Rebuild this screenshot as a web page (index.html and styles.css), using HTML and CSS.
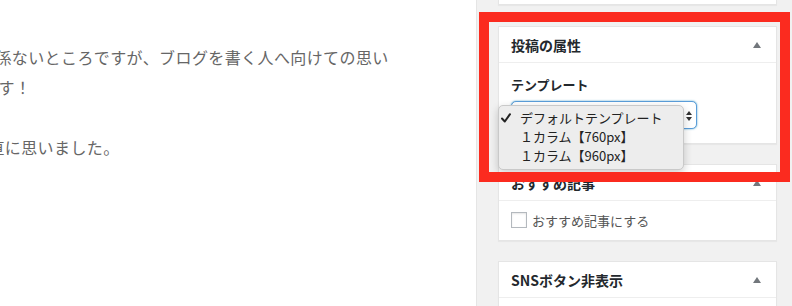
FILE: index.html
```html
<!DOCTYPE html>
<html>
<head>
    <meta charset="utf-8" />
    <title>投稿の編集</title>
    <link rel="stylesheet" href="styles.css">
</head>
<body>
    <div class="content">
        <div class="line l1">関係ないところですが、ブログを書く人へ向けての思い</div>
        <div class="line l2">です！</div>
        <div class="line">&nbsp;</div>
        <div class="line l3">素直に思いました。</div>
    </div>

    <div class="sidebar">
        <div class="postbox cut"></div>

        <div class="postbox">
            <div class="postbox-header">
                <h2>投稿の属性</h2>
                <span class="toggle"></span>
            </div>
            <div class="inside">
                <p class="label">テンプレート</p>
                <div class="select">
                    <span class="arrows">
                        <span class="up"></span>
                        <span class="down"></span>
                    </span>
                    <ul class="dropdown">
                        <li class="checked">
                            <svg class="check" width="10" height="10" viewBox="0 0 10 10">
                                <path d="M1 5.5 L3.8 8.5 L9 1.2" fill="none" stroke="#222" stroke-width="2" stroke-linecap="round" stroke-linejoin="round"/>
                            </svg>デフォルトテンプレート
                        </li>
                        <li>１カラム【760px】</li>
                        <li>１カラム【960px】</li>
                    </ul>
                </div>
            </div>
        </div>

        <div class="postbox">
            <div class="postbox-header">
                <h2>おすすめ記事</h2>
                <span class="toggle"></span>
            </div>
            <div class="inside check-row">
                <span class="checkbox"></span>
                <span>おすすめ記事にする</span>
            </div>
        </div>

        <div class="postbox">
            <div class="postbox-header">
                <h2>SNSボタン非表示</h2>
                <span class="toggle"></span>
            </div>
            <div class="inside"></div>
        </div>
    </div>

    <div class="highlight"></div>
</body>
</html>
```

FILE: styles.css
```css
html {
    overflow: hidden;
}

body {
    margin: 0;
    padding: 0;
    display: flex;
    height: 306px;
    overflow: hidden;
    position: relative;
    font-family: "Noto Sans CJK JP", "Noto Sans", sans-serif;
    background-color: #f1f1f1;
}

.content {
    width: 476px;
    background-color: white;
    border-right: 1px solid #e5e5e5;
    padding-top: 42px;
    overflow: hidden;
    flex-shrink: 0;
}

.line {
    font-size: 16px;
    line-height: 30px;
    letter-spacing: 0.4px;
    color: #666;
    white-space: nowrap;
}

.l1 {
    margin-left: -21px;
}

.l2 {
    margin-left: -18px;
}

.l3 {
    margin-left: -28px;
}

.sidebar {
    flex: 1;
    padding: 0 15px 0 21px;
    overflow: hidden;
}

.postbox {
    background-color: white;
    border: 1px solid #e5e5e5;
    box-shadow: 0 1px 1px rgba(0, 0, 0, 0.04);
    margin-bottom: 20px;
}

.postbox.cut {
    border-top: none;
    height: 4px;
    margin-bottom: 21px;
}

.postbox-header {
    height: 35px;
    border-bottom: 1px solid #eee;
    display: flex;
    align-items: center;
    justify-content: space-between;
    padding: 0 15px 0 12px;
}

.postbox-header h2 {
    margin: 0;
    font-size: 14px;
    font-weight: bold;
    color: #23282d;
}

.toggle {
    width: 0;
    height: 0;
    border-left: 4px solid transparent;
    border-right: 4px solid transparent;
    border-bottom: 6px solid #72777c;
}

.inside {
    padding: 12px 12px 14px;
}

.label {
    margin: 0 0 6px;
    font-size: 13px;
    line-height: 20px;
    font-weight: bold;
    color: #23282d;
}

.select {
    position: relative;
    width: 186px;
    height: 28px;
    box-sizing: border-box;
    border: 1px solid #5b9dd9;
    border-radius: 5px;
    box-shadow: 0 0 2px rgba(30, 140, 190, 0.8);
    background-color: white;
}

.arrows {
    position: absolute;
    right: 4px;
    top: 9px;
    display: flex;
    flex-direction: column;
    gap: 2px;
}

.arrows .up,
.arrows .down {
    width: 0;
    height: 0;
    border-left: 3px solid transparent;
    border-right: 3px solid transparent;
}

.arrows .up {
    border-bottom: 4px solid #333;
}

.arrows .down {
    border-top: 4px solid #333;
}

.dropdown {
    position: absolute;
    left: -14px;
    top: 3px;
    width: 186px;
    box-sizing: border-box;
    margin: 0;
    padding: 2px 0 4px;
    list-style: none;
    background-color: #ededed;
    border: 1px solid #c9c9c9;
    border-radius: 5px;
    box-shadow: 0 3px 8px rgba(0, 0, 0, 0.2);
}

.dropdown li {
    height: 19px;
    line-height: 19px;
    font-size: 13px;
    color: #222;
    padding-left: 21px;
    position: relative;
    white-space: nowrap;
}

.dropdown .check {
    position: absolute;
    left: 2px;
    top: 5px;
}

.check-row {
    display: flex;
    align-items: center;
    gap: 5px;
    height: 20px;
    padding: 9px 12px 10px;
    font-size: 13px;
    color: #555;
}

.checkbox {
    width: 14px;
    height: 14px;
    border: 1px solid #b4b9be;
    background-color: white;
    box-shadow: inset 0 1px 2px rgba(0, 0, 0, 0.1);
}

.highlight {
    position: absolute;
    left: 479px;
    top: 12px;
    width: 311px;
    height: 170px;
    box-sizing: border-box;
    border: 10px solid #fb2b1f;
}
```
